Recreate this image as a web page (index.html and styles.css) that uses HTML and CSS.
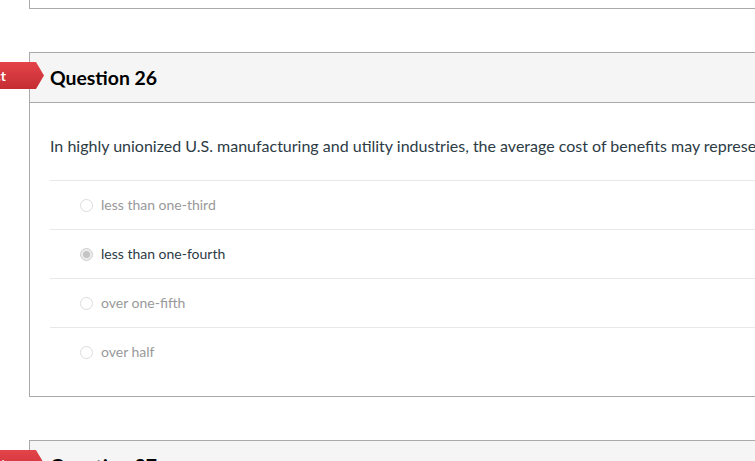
FILE: index.html
```html
<!DOCTYPE html>
<html>
<head>
<meta charset="utf-8">
<link rel="stylesheet" href="styles.css">
</head>
<body>
<div class="page">
  <div class="card card-prev"></div>

  <div class="card">
    <div class="flag">Incorrect</div>
    <div class="card-header"><h2 class="title">Question 26</h2></div>
    <div class="card-body">
      <div class="question-text">In highly unionized U.S. manufacturing and utility industries, the average cost of benefits may represent what portion of total payroll costs?</div>
      <div class="answers">
        <div class="answer"><span class="radio"></span><span class="label">less than one-third</span></div>
        <div class="answer selected"><span class="radio"></span><span class="label">less than one-fourth</span></div>
        <div class="answer"><span class="radio"></span><span class="label">over one-fifth</span></div>
        <div class="answer"><span class="radio"></span><span class="label">over half</span></div>
      </div>
    </div>
  </div>

  <div class="card">
    <div class="flag">Incorrect</div>
    <div class="card-header"><h2 class="title">Question 27</h2></div>
    <div class="card-body tall"></div>
  </div>
</div>
</body>
</html>
```

FILE: styles.css
```css
html, body {
  margin: 0;
  padding: 0;
  background: #ffffff;
  overflow: hidden;
  height: 461px;
}
body {
  font-family: Lato, "Open Sans", "Liberation Sans", sans-serif;
  color: #2d3b45;
}
.page {
  display: flex;
  flex-direction: column;
  gap: 43px;
  padding-left: 29px;
  width: 1000px;
}
.card {
  position: relative;
  border: 1px solid #aaaaaa;
  background: #fff;
}
.card-prev {
  border-top: none;
  height: 8px;
}
.flag {
  position: absolute;
  top: 9px;
  left: -144px;
  width: 158px;
  height: 27px;
  box-sizing: border-box;
  padding-right: 38px;
  line-height: 27px;
  text-align: right;
  color: #fff;
  font-weight: bold;
  font-size: 14px;
  background: linear-gradient(#e4444a, #c42d33);
  clip-path: polygon(0 0, 150px 0, 158px 50%, 150px 100%, 0 100%);
}
.card-header {
  background: #f5f5f5;
  border-bottom: 1px solid #aaaaaa;
  height: 49px;
  display: flex;
  align-items: center;
  padding-left: 20px;
}
.title {
  margin: 0;
  font-size: 19.4px;
  font-weight: bold;
  color: #000;
}
.card-body {
  padding: 33px 0 20px 20px;
}
.card-body.tall {
  height: 200px;
}
.question-text {
  font-size: 16px;
  line-height: 20px;
  white-space: nowrap;
  margin-bottom: 24px;
}
.answers {
  display: flex;
  flex-direction: column;
}
.answer {
  border-top: 1px solid #e8e8e8;
  height: 48px;
  display: flex;
  align-items: center;
  padding-left: 30px;
  gap: 8px;
  font-size: 14px;
  line-height: 16px;
  color: #999999;
}
.answer.selected {
  color: #2d3b45;
}
.radio {
  width: 11px;
  height: 11px;
  border-radius: 50%;
  border: 1px solid #dcdcdc;
  background: #fff;
  box-sizing: content-box;
  position: relative;
}
.answer.selected .radio {
  background: #ececec;
  border-color: #d0d0d0;
}
.answer.selected .radio::after {
  content: "";
  position: absolute;
  left: 2px;
  top: 2px;
  width: 7px;
  height: 7px;
  border-radius: 50%;
  background: #c4c4c4;
}
```
